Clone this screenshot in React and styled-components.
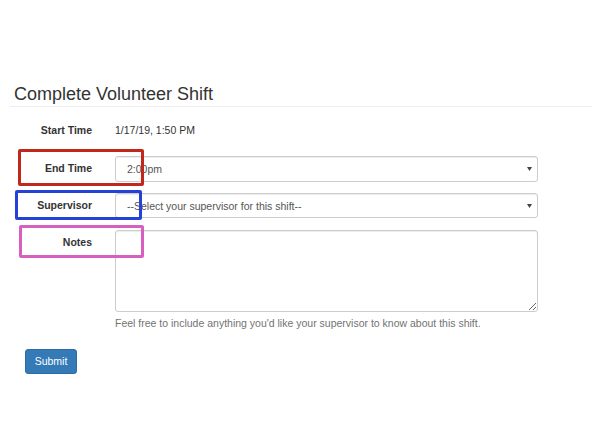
import React from "react";
import styled, { createGlobalStyle } from "styled-components";

const Global = createGlobalStyle`
  html, body { margin: 0; padding: 0; background: #fff; }
  body { font-family: "Liberation Sans", Arial, sans-serif; color: #333; }
  * { box-sizing: border-box; }
`;

const Page = styled.div`
  width: 592px;
  height: 444px;
  padding-top: 84px;
  padding-left: 10px;
  overflow: hidden;
`;

const Header = styled.div`
  border-bottom: 1px solid #eee;
  padding: 0 0 2px 4px;
`;

const Title = styled.h3`
  margin: 0;
  font-size: 18px;
  line-height: 20px;
  font-weight: 400;
  color: #333;
`;

const Form = styled.form`
  display: flex;
  flex-direction: column;
  margin: 0;
`;

const Row = styled.div`
  position: relative;
  display: grid;
  grid-template-columns: 82px 423px;
  column-gap: 23px;
  align-items: ${(p) => p.$align || "center"};
  margin-top: ${(p) => p.$mt}px;
  font-size: 10.5px;
  line-height: 15px;
`;

const Label = styled.label`
  text-align: right;
  font-weight: 700;
  color: #333;
  padding-top: ${(p) => p.$pt || 0}px;
`;

const Static = styled.div`
  color: #333;
`;

const SelectWrap = styled.div`
  position: relative;
  height: 25.5px;
`;

const Select = styled.select`
  appearance: none;
  -webkit-appearance: none;
  width: 100%;
  height: 25.5px;
  padding: 0 20px 0 11px;
  border: 1px solid #ccc;
  border-radius: 3px;
  background: #fff;
  box-shadow: inset 0 1px 1px rgba(0, 0, 0, 0.075);
  font-family: "Liberation Sans", Arial, sans-serif;
  font-size: 10.5px;
  color: #555;
  outline: none;
`;

const Arrow = styled.svg`
  position: absolute;
  right: 6px;
  top: 11px;
  width: 5px;
  height: 4px;
  pointer-events: none;
`;

const TextArea = styled.textarea`
  display: block;
  width: 100%;
  height: 82px;
  padding: 4px 9px;
  border: 1px solid #ccc;
  border-radius: 3px;
  box-shadow: inset 0 1px 1px rgba(0, 0, 0, 0.075);
  font-family: "Liberation Sans", Arial, sans-serif;
  font-size: 10.5px;
  color: #555;
  resize: vertical;
  outline: none;
`;

const Help = styled.p`
  margin: 4px 0 0 105px;
  font-size: 10.5px;
  line-height: 15px;
  color: #737373;
`;

const Submit = styled.button`
  align-self: flex-start;
  margin: 18px 0 0 15px;
  width: 52px;
  height: 25px;
  padding: 0;
  border: 1px solid #2e6da4;
  border-radius: 3px;
  background: #337ab7;
  color: #fff;
  font-family: "Liberation Sans", Arial, sans-serif;
  font-size: 10.5px;
  line-height: 15px;
`;

const Highlight = styled.div`
  position: absolute;
  left: ${(p) => p.$x}px;
  top: ${(p) => p.$y}px;
  width: ${(p) => p.$w}px;
  height: ${(p) => p.$h}px;
  border: 3px solid ${(p) => p.$color};
  border-radius: 2px;
  pointer-events: none;
`;

const Caret = () => (
  <Arrow viewBox="0 0 5 4">
    <path d="M0 0 H5 L2.5 4 Z" fill="#444" />
  </Arrow>
);

export default function App() {
  return (
    <>
      <Global />
      <Page>
        <Header>
          <Title>Complete Volunteer Shift</Title>
        </Header>
        <Form onSubmit={(e) => e.preventDefault()}>
          <Row $mt={15.5}>
            <Label>Start Time</Label>
            <Static>1/17/19, 1:50 PM</Static>
          </Row>
          <Row $mt={18.5}>
            <Label>End Time</Label>
            <SelectWrap>
              <Select defaultValue="2:00pm">
                <option>2:00pm</option>
              </Select>
              <Caret />
            </SelectWrap>
            <Highlight $x={8} $y={-7} $w={126} $h={37} $color="#c1271b" />
          </Row>
          <Row $mt={11.25}>
            <Label>Supervisor</Label>
            <SelectWrap>
              <Select defaultValue="">
                <option value="">--Select your supervisor for this shift--</option>
              </Select>
              <Caret />
            </SelectWrap>
            <Highlight $x={5} $y={-3} $w={127} $h={30} $color="#2541d6" />
          </Row>
          <Row $mt={11.25} $align="start">
            <Label $pt={5}>Notes</Label>
            <TextArea />
            <Highlight $x={9} $y={-4.5} $w={125} $h={33} $color="#d65fbf" />
          </Row>
          <Help>Feel free to include anything you'd like your supervisor to know about this shift.</Help>
          <Submit type="submit">Submit</Submit>
        </Form>
      </Page>
    </>
  );
}
